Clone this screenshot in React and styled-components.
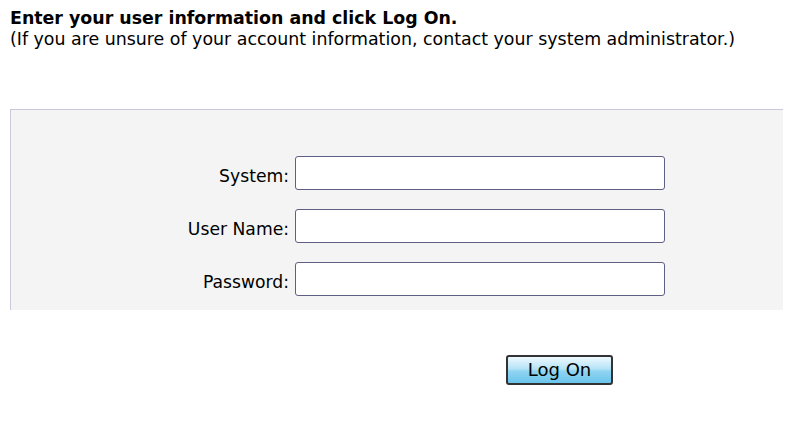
import React from "react";
import styled, { createGlobalStyle } from "styled-components";

const Global = createGlobalStyle`
  html, body { margin: 0; padding: 0; background: #fff; }
  body { font-family: Tahoma, "DejaVu Sans", Verdana, sans-serif; color: #000; }
`;

const Page = styled.div`
  padding: 8px 0 0 10px;
  width: 773px;
`;

const Heading = styled.div`
  font-size: 17.4px;
  font-weight: bold;
  line-height: 21px;
`;

const Note = styled.div`
  font-size: 17.4px;
  line-height: 21px;
`;

const Panel = styled.div`
  margin-top: 59px;
  height: 201px;
  box-sizing: border-box;
  background: #f4f4f4;
  border-top: 1px solid #c9c9d9;
  border-left: 1px solid #c9c9d9;
  padding-top: 46px;
  display: flex;
  flex-direction: column;
  gap: 19px;
`;

const Row = styled.div`
  display: grid;
  grid-template-columns: 278px 370px;
  column-gap: 6px;
  align-items: center;
`;

const Label = styled.label`
  text-align: right;
  font-size: 17.2px;
  padding-top: 5px;
`;

const Input = styled.input`
  box-sizing: border-box;
  height: 34px;
  width: 370px;
  border: 1px solid #5f5f85;
  border-radius: 3px;
  background: #fff;
  margin: 0;
  padding: 0 4px;
  font: inherit;
`;

const Actions = styled.div`
  display: flex;
  padding: 45px 0 0 496px;
`;

const Button = styled.button`
  box-sizing: border-box;
  width: 107px;
  height: 30px;
  border: 2px solid #333;
  border-radius: 3px;
  background: linear-gradient(#eef9fe 0%, #b5e3f6 45%, #8fd4f1 55%, #6ac5ec 100%);
  font-family: Tahoma, "DejaVu Sans", Verdana, sans-serif;
  font-size: 18px;
  color: #000;
  padding: 0;
  line-height: 24px;
`;

export default function App() {
  return (
    <>
      <Global />
      <Page>
        <Heading>Enter your user information and click Log On.</Heading>
        <Note>(If you are unsure of your account information, contact your system administrator.)</Note>
        <Panel>
          <Row>
            <Label htmlFor="sys">System:</Label>
            <Input id="sys" type="text" />
          </Row>
          <Row>
            <Label htmlFor="usr">User Name:</Label>
            <Input id="usr" type="text" />
          </Row>
          <Row>
            <Label htmlFor="pwd">Password:</Label>
            <Input id="pwd" type="password" />
          </Row>
        </Panel>
        <Actions>
          <Button>Log On</Button>
        </Actions>
      </Page>
    </>
  );
}
